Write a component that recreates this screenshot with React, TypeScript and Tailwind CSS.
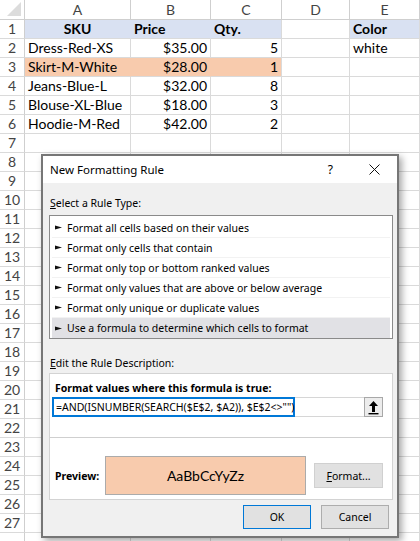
import React from 'react';

type Cell = { text?: string; align?: 'left' | 'right' | 'center'; bold?: boolean; fill?: string };

const ruleTypes = [
    "Format all cells based on their values",
    "Format only cells that contain",
    "Format only top or bottom ranked values",
    "Format only values that are above or below average",
    "Format only unique or duplicate values",
    "Use a formula to determine which cells to format",
];

const BLUE = 'blue';
const ORANGE = 'orange';

const rows: Cell[][] = [
    [
        { text: 'SKU', align: 'center', bold: true, fill: BLUE },
        { text: 'Price', bold: true, fill: BLUE },
        { text: 'Qty.', bold: true, fill: BLUE },
        {},
        { text: 'Color', bold: true, fill: BLUE },
    ],
    [{ text: 'Dress-Red-XS' }, { text: '$35.00', align: 'right' }, { text: '5', align: 'right' }, {}, { text: 'white' }],
    [
        { text: 'Skirt-M-White', fill: ORANGE },
        { text: '$28.00', align: 'right', fill: ORANGE },
        { text: '1', align: 'right', fill: ORANGE },
        {},
        {},
    ],
    [{ text: 'Jeans-Blue-L' }, { text: '$32.00', align: 'right' }, { text: '8', align: 'right' }, {}, {}],
    [{ text: 'Blouse-XL-Blue' }, { text: '$18.00', align: 'right' }, { text: '3', align: 'right' }, {}, {}],
    [{ text: 'Hoodie-M-Red' }, { text: '$42.00', align: 'right' }, { text: '2', align: 'right' }, {}, {}],
];

// rows 7..28, the last one only peeks in at the bottom edge
const allRows: Cell[][] = [
    ...rows,
    ...Array.from({ length: 22 }, () => [{}, {}, {}, {}, {}] as Cell[]),
];

const GridCell: React.FC<{ cell: Cell; next?: Cell }> = ({ cell, next }) => {
    const filledRun = cell.fill && next && next.fill === cell.fill;
    const bg = cell.fill === BLUE ? 'bg-[#d9e1f2]' : cell.fill === ORANGE ? 'bg-[#f8cbad]' : 'bg-white';
    const rightBorder = filledRun
        ? cell.fill === BLUE
            ? 'border-r-[#d9e1f2]'
            : 'border-r-[#f8cbad]'
        : 'border-r-[#dadada]';
    const justify =
        cell.align === 'right' ? 'justify-end' : cell.align === 'center' ? 'justify-center' : 'justify-start';
    return (
        <div
            className={`h-[19px] flex items-center px-[3px] border-r border-b border-b-[#dadada] whitespace-nowrap overflow-hidden ${bg} ${rightBorder} ${justify} ${cell.bold ? 'font-bold' : ''}`}
        >
            {cell.text}
        </div>
    );
};

const RuleArrow = () => (
    <svg width="7" height="5" viewBox="0 0 7 5" className="shrink-0">
        <polygon points="0,0.6 7,2.5 0,4.4" fill="#111" />
    </svg>
);

const App: React.FC = () => {
    return (
        <div className="relative w-[420px] h-[541px] overflow-hidden bg-white text-black">
            {/* Spreadsheet */}
            <div className="grid grid-cols-[25px_106px_80px_71px_68px_70px] font-['Lato',sans-serif] text-[14px] leading-none text-black">
                {/* header row */}
                <div className="relative h-[20px] border-r border-b border-[#cfcfcf] bg-white">
                    <svg width="14" height="14" viewBox="0 0 14 14" className="absolute right-[3px] bottom-[3px]">
                        <polygon points="14,0 14,14 0,14" fill="#dcdcdc" />
                    </svg>
                </div>
                {['A', 'B', 'C', 'D', 'E'].map((c) => (
                    <div
                        key={c}
                        className="h-[20px] flex items-center justify-center border-r border-b border-[#cfcfcf] bg-white text-[#444] text-[14px]"
                    >
                        {c}
                    </div>
                ))}

                {allRows.map((row, ri) => (
                    <React.Fragment key={ri}>
                        <div className="h-[19px] flex items-center justify-center border-r border-b border-r-[#cfcfcf] border-b-[#dadada] bg-white text-[#444]">
                            {ri < 27 ? ri + 1 : ''}
                        </div>
                        {row.map((cell, ci) => (
                            <GridCell key={ci} cell={cell} next={row[ci + 1]} />
                        ))}
                    </React.Fragment>
                ))}
            </div>

            {/* New Formatting Rule dialog */}
            <div className="absolute left-[41px] top-[154px] w-[358px] h-[384px] border-2 border-[#767676] bg-[#f0f0f0] shadow-[3px_3px_7px_rgba(0,0,0,0.35)] flex flex-col font-['Noto_Sans',sans-serif] text-[10.5px] leading-[16px] text-black">
                {/* title bar */}
                <div className="h-[27px] shrink-0 bg-white flex items-center justify-between pl-[7px] pr-[17px]">
                    <span className="text-[11.5px]">New Formatting Rule</span>
                    <div className="flex items-center gap-[36px]">
                        <span className="text-[12px]">?</span>
                        <svg width="11" height="11" viewBox="0 0 11 11">
                            <path d="M0.5 0.5 L10.5 10.5 M10.5 0.5 L0.5 10.5" stroke="#111" strokeWidth="1" />
                        </svg>
                    </div>
                </div>

                <div className="flex flex-col pl-[6px] pr-[4px]">
                    <div className="mt-[12px] pl-[1px]">
                        <u>S</u>elect a Rule Type:
                    </div>

                    {/* rule type list */}
                    <div className="mt-[4px] h-[124px] border border-[#8a8a8a] bg-white pt-[2px] px-[2px]">
                        {ruleTypes.map((r, i) => (
                            <div
                                key={r}
                                className={`h-[20px] flex items-center gap-[5px] pl-[3px] ${
                                    i === ruleTypes.length - 1 ? 'bg-[#e1e1e5]' : 'border-b border-[#f2f2f2]'
                                }`}
                            >
                                <RuleArrow />
                                <span>{r}</span>
                            </div>
                        ))}
                    </div>

                    <div className="mt-[16px] pl-[1px]">
                        <u>E</u>dit the Rule Description:
                    </div>

                    {/* rule description panel */}
                    <div className="mt-[2px] h-[127px] border border-[#d3d3d3] bg-white flex flex-col">
                        <div className="pt-[6px] pl-[5px] font-bold">Format values where this formula is true:</div>
                        <div className="mt-[1px] ml-[2px] w-[331px] h-[20px] flex">
                            <div className="w-[243px] h-full border-2 border-[#0078d7] flex items-center pl-[2px] whitespace-nowrap">
                                =AND(ISNUMBER(SEARCH($E$2, $A2)), $E$2&lt;&gt;"")
                            </div>
                            <div className="flex-1 h-full border-y border-[#d6d6d6]" />
                            <div className="w-[19px] h-full border border-[#a8a8a8] bg-[#ececec] flex items-center justify-center">
                                <svg width="11" height="15" viewBox="0 0 11 15">
                                    <path d="M5.5 1 L10 6 L7 6 L7 12 L4 12 L4 6 L1 6 Z" fill="#000" />
                                    <rect x="0.5" y="13" width="10" height="1.4" fill="#000" />
                                </svg>
                            </div>
                        </div>

                        <div className="mt-[20px] h-px bg-[#cfcfcf]" />

                        <div className="mt-[18px] flex items-center">
                            <span className="pl-[5px] w-[55px] font-bold">Preview:</span>
                            <div className="w-[201px] h-[39px] border border-[#ababab] bg-[#f8cbad] flex items-center justify-center font-['Lato',sans-serif] text-[14px]">
                                AaBbCcYyZz
                            </div>
                            <div className="ml-[8px] w-[69px] h-[25px] border border-[#d0d0d0] bg-[#e1e1e1] flex items-center justify-center">
                                <span>
                                    <u>F</u>ormat...
                                </span>
                            </div>
                        </div>
                    </div>

                    {/* buttons */}
                    <div className="mt-[5px] flex justify-end gap-[10px] pr-[4px]">
                        <div className="w-[68px] h-[24px] border border-[#0078d7] bg-[#e1e1e1] flex items-center justify-center">
                            OK
                        </div>
                        <div className="w-[68px] h-[24px] border border-[#adadad] bg-[#e1e1e1] flex items-center justify-center">
                            Cancel
                        </div>
                    </div>
                </div>
            </div>
        </div>
    );
};

export default App;
